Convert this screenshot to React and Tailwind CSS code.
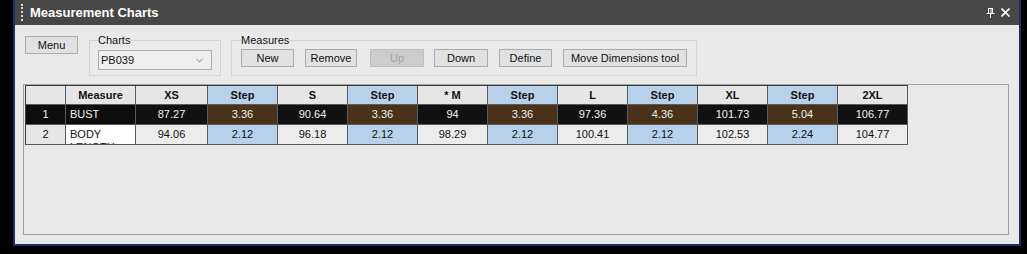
import { ChevronDown } from 'lucide-react';

const sizes = [
  { name: "XS", step: false },
  { name: "Step", step: true },
  { name: "S", step: false },
  { name: "Step", step: true },
  { name: "* M", step: false },
  { name: "Step", step: true },
  { name: "L", step: false },
  { name: "Step", step: true },
  { name: "XL", step: false },
  { name: "Step", step: true },
  { name: "2XL", step: false },
];

const rows = [
  { id: 1, measure: "BUST", values: ["87.27", "3.36", "90.64", "3.36", "94", "3.36", "97.36", "4.36", "101.73", "5.04", "106.77"], selected: true },
  { id: 2, measure: "BODY LENGTH", values: ["94.06", "2.12", "96.18", "2.12", "98.29", "2.12", "100.41", "2.12", "102.53", "2.24", "104.77"], selected: false },
];

function Button({ children, className = "", disabled }) {
  return (
    <button
      className={`h-[18px] border text-[11px] leading-none ${disabled ? 'border-[#bfbfbf] bg-[#cccccc] text-[#a3a3a3]' : 'border-[#adadad] bg-[#e1e1e1] text-[#111]'} ${className}`}
    >
      {children}
    </button>
  );
}

function PinIcon() {
  return (
    <svg width="9" height="10" viewBox="0 0 9 10" className="text-white">
      <path d="M2 0.5h5M2.5 0.5v5M6.5 0.5v5M5 0.5v5M0.5 5.5h8M4.5 5.5v4.5" stroke="currentColor" strokeWidth="1" fill="none" />
    </svg>
  );
}

function CloseIcon() {
  return (
    <svg width="9" height="9" viewBox="0 0 9 9">
      <path d="M0.5 0.5L8.5 8.5M8.5 0.5L0.5 8.5" stroke="white" strokeWidth="1.6" />
    </svg>
  );
}

export default function App() {
  return (
    <div className="h-[254px] w-[1027px] bg-black pl-[13px] font-['Liberation_Sans',Arial,sans-serif]">
      <div className="flex h-[246px] w-[1008px] flex-col border-x-2 border-b-2 border-[#1f2e6c] bg-[#e9e9e9]">
        {/* title bar */}
        <div className="flex h-[25px] items-center bg-[#474747] pl-[6px] pr-[9px]">
          <div className="h-[17px] w-0 border-l-2 border-dotted border-[#d8d8d8]" />
          <span className="ml-[7px] text-[13px] font-bold text-white">Measurement Charts</span>
          <div className="ml-auto flex items-center gap-[6px]">
            <PinIcon />
            <CloseIcon />
          </div>
        </div>

        {/* body */}
        <div className="flex flex-1 flex-col pl-[8px] pr-[10px] pt-[9px]">
          <div className="flex h-[42px] items-start">
            <Button className="ml-[2px] mt-[2px] h-[17px] w-[53px]">Menu</Button>

            <fieldset className="ml-[11px] h-[42px] w-[131px] border border-[#d3d3d3] px-[8px]">
              <legend className="text-[11px] leading-[13px] text-[#111]">Charts</legend>
              <div className="mt-[3px] flex h-[20px] w-[114px] items-center justify-between border border-[#acacac] bg-[#efefef] pl-[2px] pr-[6px] text-[11px] text-[#111]">
                <span>PB039</span>
                <ChevronDown size={11} strokeWidth={1.5} className="text-[#555]" />
              </div>
            </fieldset>

            <fieldset className="ml-[10px] h-[42px] w-[465px] border border-[#d3d3d3] px-[9px]">
              <legend className="text-[11px] leading-[13px] text-[#111]">Measures</legend>
              <div className="mt-[2px] flex">
                <Button className="w-[53px]">New</Button>
                <Button className="ml-[11px] w-[52px]">Remove</Button>
                <Button className="ml-[13px] w-[54px]" disabled>Up</Button>
                <Button className="ml-[10px] w-[54px]">Down</Button>
                <Button className="ml-[11px] w-[53px]">Define</Button>
                <Button className="ml-[11px] w-[124px]">Move Dimensions tool</Button>
              </div>
            </fieldset>
          </div>

          {/* grid box */}
          <div className="mt-[8px] h-[151px] border border-[#a0a0a0] pl-[1px]">
            <div className="grid w-fit grid-cols-[40px_70px_72px_repeat(10,70px)] border-l border-t border-[#3c3c3c] text-[11px]">
              <div className="h-[19px] border-b border-r border-[#5a5a5a] bg-[#e6e6e6]" />
              <div className="flex h-[19px] items-center justify-center border-b border-r border-[#5a5a5a] bg-[#e6e6e6] font-bold text-[#111]">Measure</div>
              {sizes.map((s, i) => (
                <div
                  key={i}
                  className={`flex h-[19px] items-center justify-center border-b border-r border-[#5a5a5a] font-bold text-[#111] ${s.step ? 'bg-[#b8d1eb]' : 'bg-[#e6e6e6]'}`}
                >
                  {s.name}
                </div>
              ))}

              {rows.map((row) => (
                <div key={row.id} className="contents">
                  <div className={`flex h-[20px] items-center justify-center border-b border-r border-[#5a5a5a] ${row.selected ? 'bg-[#0d0d0d] text-[#f2f2f2]' : 'bg-[#e6e6e6] text-[#111]'}`}>
                    {row.id}
                  </div>
                  <div className={`h-[20px] overflow-hidden border-b border-r border-[#5a5a5a] pl-[4px] pt-[3px] leading-[13px] ${row.selected ? 'bg-[#0d0d0d] text-[#f2f2f2]' : 'bg-white text-[#111]'}`}>
                    <div className="w-[40px]">{row.measure}</div>
                  </div>
                  {row.values.map((v, i) => {
                    const step = sizes[i].step;
                    let cls = 'bg-[#ececec] text-[#111]';
                    if (row.selected) cls = step ? 'bg-[#4a3119] text-[#f0f0f0]' : 'bg-[#111111] text-[#f2f2f2]';
                    else if (step) cls = 'bg-[#b8d1eb] text-[#111]';
                    return (
                      <div key={i} className={`flex h-[20px] items-center justify-center border-b border-r border-[#5a5a5a] ${cls}`}>
                        {v}
                      </div>
                    );
                  })}
                </div>
              ))}
            </div>
          </div>
        </div>
      </div>
    </div>
  );
}
